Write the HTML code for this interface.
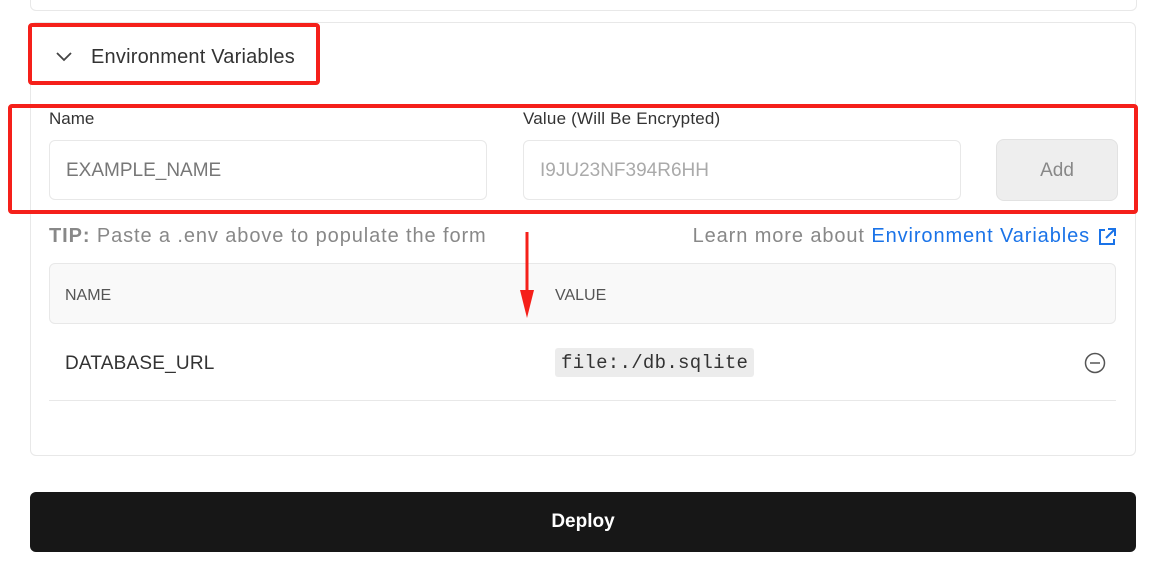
<!DOCTYPE html>
<html><head><style>
body{margin:0;width:1155px;height:562px;background:#fff;font-family:"Liberation Sans",sans-serif;position:relative;overflow:hidden;color:#333}
.abs{position:absolute}
.in{position:absolute;border:1px solid #e8e8e8;border-radius:6px;background:#fff;font-size:19px;color:#777;box-sizing:border-box;padding-left:16px;line-height:60px}
</style></head><body>
<div class="abs" style="left:30px;top:-10px;width:1105px;height:19px;border:1px solid #e8e8e8;border-radius:6px"></div>
<div class="abs" style="left:30px;top:22px;width:1104px;height:432px;border:1px solid #e8e8e8;border-radius:6px"></div>
<svg class="abs" style="left:55px;top:51px" width="18" height="12"><path d="M2 2 L9 9 L16 2" stroke="#444" stroke-width="1.8" fill="none"/></svg>
<div class="abs" style="left:91px;top:46px;font-size:20px;color:#333;letter-spacing:0.2px">Environment Variables</div>
<div class="abs" style="left:49px;top:109px;font-size:17px;color:#333">Name</div>
<div class="abs" style="left:523px;top:109px;font-size:17px;color:#333;letter-spacing:0.2px">Value (Will Be Encrypted)</div>
<div class="in" style="left:49px;top:140px;width:438px;height:60px">EXAMPLE_NAME</div>
<div class="in" style="left:523px;top:140px;width:438px;height:60px;color:#aaa">I9JU23NF394R6HH</div>
<div class="abs" style="left:996px;top:139px;width:122px;height:62px;background:#eee;border:1px solid #e2e2e2;border-radius:8px;box-sizing:border-box;text-align:center;line-height:62px;font-size:19px;color:#888">Add</div>
<div class="abs" style="left:49px;top:225px;font-size:20px;color:#888;letter-spacing:0.9px;white-space:nowrap"><b>TIP:</b> Paste a .env above to populate the form</div>
<div class="abs" style="right:65px;top:225px;font-size:20px;color:#888;letter-spacing:0.9px;white-space:nowrap">Learn more about <span style="color:#1a73e8">Environment Variables</span></div>
<svg class="abs" style="left:1097px;top:227px" width="20" height="20" fill="none" stroke="#1a73e8" stroke-width="2"><path d="M8 3H3v14h14v-5M11 2h7v7M18 2L9 11"/></svg>
<div class="abs" style="left:49px;top:263px;width:1067px;height:61px;background:#f9f9f9;border:1px solid #e8e8e8;border-radius:6px;box-sizing:border-box"></div>
<div class="abs" style="left:65px;top:287px;font-size:16px;color:#555">NAME</div>
<div class="abs" style="left:555px;top:287px;font-size:16px;color:#555">VALUE</div>
<div class="abs" style="left:65px;top:353px;font-size:19px;color:#333;letter-spacing:0.2px">DATABASE_URL</div>
<div class="abs" style="left:555px;top:348px;height:29px;padding:0 6px;background:#ececec;border-radius:3px;font-family:'Liberation Mono',monospace;font-size:19px;line-height:31px;color:#333;letter-spacing:0.3px">file:./db.sqlite</div>
<svg class="abs" style="left:1084px;top:352px" width="22" height="22" fill="none" stroke="#555" stroke-width="1.5"><circle cx="11" cy="11" r="9.5"/><path d="M6 11h10"/></svg>
<div class="abs" style="left:49px;top:400px;width:1067px;height:1px;background:#e8e8e8"></div>
<div class="abs" style="left:30px;top:492px;width:1106px;height:60px;background:#171717;border-radius:6px;color:#fff;text-align:center;line-height:60px;font-size:19px;font-weight:bold">Deploy</div>
<div class="abs" style="left:28px;top:23px;width:284px;height:54px;border:4px solid #f5201a;border-radius:4px"></div>
<div class="abs" style="left:8px;top:104px;width:1122px;height:102px;border:4px solid #f5201a;border-radius:4px"></div>
<svg class="abs" style="left:515px;top:232px" width="24" height="88"><path d="M12 0V60" stroke="#f5201a" stroke-width="3"/><path d="M5 58L12 86L19 58Z" fill="#f5201a"/></svg>
</body></html>
